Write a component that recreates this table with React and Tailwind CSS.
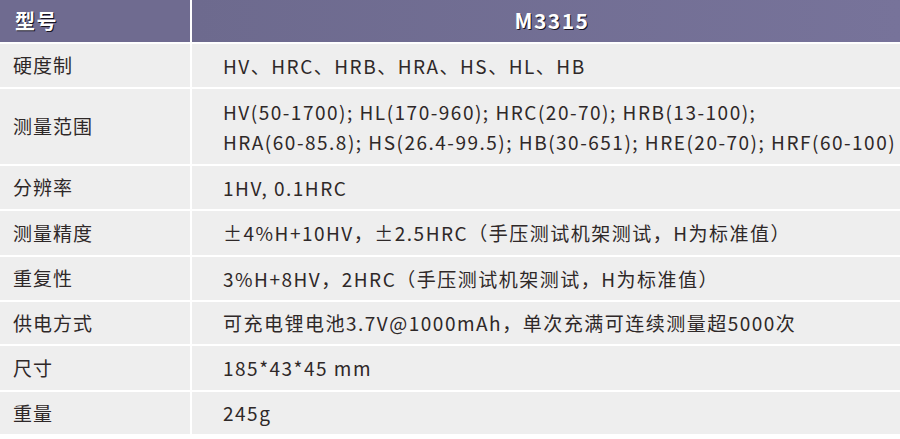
const rows = [
  { label: '硬度制', value: ['HV、HRC、HRB、HRA、HS、HL、HB'], h: 'h-[43px]' },
  {
    label: '测量范围',
    value: [
      'HV(50-1700); HL(170-960); HRC(20-70); HRB(13-100);',
      'HRA(60-85.8); HS(26.4-99.5); HB(30-651); HRE(20-70); HRF(60-100)',
    ],
    h: 'h-[75px]',
  },
  { label: '分辨率', value: ['1HV, 0.1HRC'], h: 'h-[43px]' },
  { label: '测量精度', value: ['±4%H+10HV，±2.5HRC（手压测试机架测试，H为标准值）'], h: 'h-[44px]' },
  { label: '重复性', value: ['3%H+8HV，2HRC（手压测试机架测试，H为标准值）'], h: 'h-[43px]' },
  { label: '供电方式', value: ['可充电锂电池3.7V@1000mAh，单次充满可连续测量超5000次'], h: 'h-[42px]' },
  { label: '尺寸', value: ['185*43*45 mm'], h: 'h-[44px]' },
  { label: '重量', value: ['245g'], h: 'h-[42px]' },
];

export default function App() {
  return (
    <div className="w-[900px] h-[439px] bg-white font-['Noto_Sans_CJK_SC',sans-serif] text-[#2e2828] overflow-hidden">
      <div className="grid grid-cols-[190px_1fr] gap-[2px] bg-white">
        {/* Header */}
        <div className="h-[42px] bg-[#6f6b90] flex items-center pl-[15px] text-white text-[20px] font-bold tracking-[1.5px] [text-shadow:1px_1px_0_#15131f]">
          型号
        </div>
        <div className="h-[42px] bg-gradient-to-r from-[#6d6a8e] to-[#77739a] flex items-center justify-center pl-[12px] text-white text-[21px] font-bold tracking-[1.5px] [text-shadow:1px_1px_0_#15131f]">
          M3315
        </div>

        {rows.map((r) => (
          <div key={r.label} className="contents">
            <div className={`${r.h} bg-[#eeeeee] flex items-center pl-[13px] text-[19px] tracking-[1px]`}>
              {r.label}
            </div>
            <div className={`${r.h} bg-[#eeeeee] flex flex-col justify-center pl-[31px] text-[19px] leading-[30px] tracking-[1.5px]`}>
              {r.value.map((v) => (
                <div key={v} className="whitespace-nowrap">{v}</div>
              ))}
            </div>
          </div>
        ))}
      </div>
    </div>
  );
}
